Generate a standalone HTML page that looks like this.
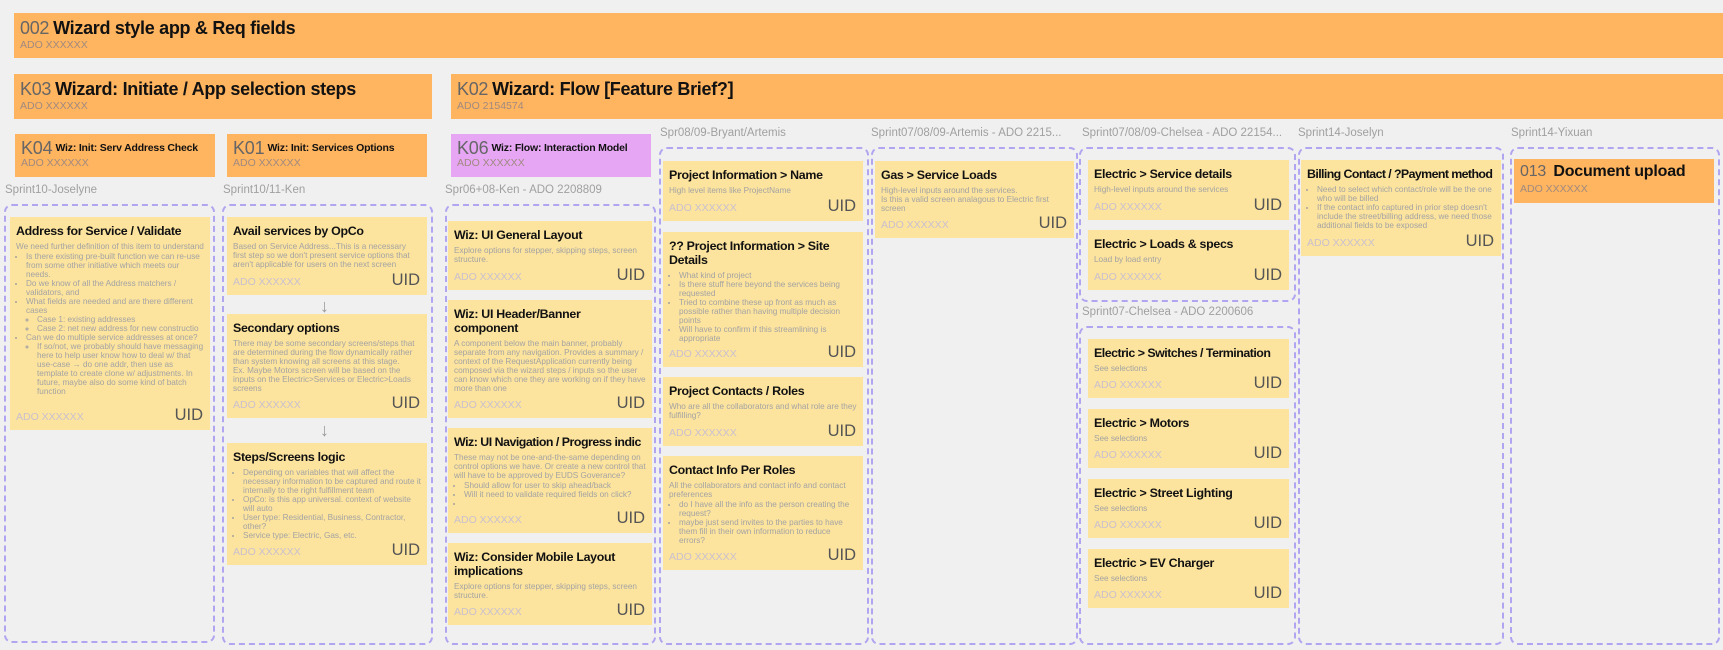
<!DOCTYPE html>
<html><head><meta charset="utf-8"><style>
*{box-sizing:border-box;margin:0;padding:0}
body{width:1723px;height:650px;background:#f0f0f0;font-family:"Liberation Sans",sans-serif;position:relative;overflow:hidden}
.ban{position:absolute;background:#ffb45f;padding:4px 6px}
.ban .t{font-size:18px;color:#111;font-weight:bold;letter-spacing:-0.3px;white-space:nowrap;line-height:22px}
.ban .t span{color:#666;font-weight:normal;margin-right:4px}
.ban .ado{font-size:10.5px;color:#a08a80;line-height:13px}
.sb{position:absolute;background:#ffb45f;padding:6px 6px}
.sb .t{font-size:10.5px;font-weight:bold;color:#111;white-space:nowrap;line-height:16px;letter-spacing:-0.2px}
.sb .t span{font-size:18px;font-weight:normal;color:#666;margin-right:3px;vertical-align:-3px}
.sb .ado{font-size:10.5px;color:#a08a80;line-height:14px}
.lbl{position:absolute;font-size:11.5px;color:#a0a0a0;white-space:nowrap}
.box{position:absolute;border:2px dashed #b0a5f0;border-radius:8px}
.c{position:absolute;background:#fce39e;padding:7px 6px 0 6px}
.c h{display:block;font-size:12.4px;font-weight:bold;color:#111;line-height:14px;letter-spacing:-0.3px;white-space:nowrap}
.c p,.c li{font-size:8.2px;color:#a3a3a3;line-height:9px}
.c p{margin-top:4px}
.c ul{padding-left:10px;margin-top:1px}
.c ul ul{padding-left:11px;margin-top:0}
.c .ado{position:absolute;left:6px;bottom:7px;font-size:10.5px;color:#c9c0cf}
.c .uid{position:absolute;right:7px;bottom:5px;font-size:16.5px;color:#555}
.arr{position:absolute;color:#999;font-size:18px;line-height:18px}
</style></head><body>

<div class="ban" style="left:14px;top:13px;width:1720px;height:45px"><div class="t"><span>002</span>Wizard style app &amp; Req fields</div><div class="ado">ADO XXXXXX</div></div>
<div class="ban" style="left:14px;top:74px;width:418px;height:45px"><div class="t"><span>K03</span>Wizard: Initiate / App selection steps</div><div class="ado">ADO XXXXXX</div></div>
<div class="ban" style="left:451px;top:74px;width:1280px;height:45px"><div class="t"><span>K02</span>Wizard: Flow [Feature Brief?]</div><div class="ado">ADO 2154574</div></div>

<div class="sb" style="left:15px;top:134px;width:200px;height:43px"><div class="t"><span>K04</span>Wiz: Init: Serv Address Check</div><div class="ado">ADO XXXXXX</div></div>
<div class="sb" style="left:227px;top:134px;width:200px;height:43px"><div class="t"><span>K01</span>Wiz: Init: Services Options</div><div class="ado">ADO XXXXXX</div></div>
<div class="sb" style="left:451px;top:134px;width:200px;height:43px;background:#e6a6f4"><div class="t"><span>K06</span>Wiz: Flow: Interaction Model</div><div class="ado">ADO XXXXXX</div></div>

<div class="lbl" style="left:5px;top:184px">Sprint10-Joselyne</div>
<div class="lbl" style="left:223px;top:184px">Sprint10/11-Ken</div>
<div class="lbl" style="left:445px;top:184px">Spr06+08-Ken - ADO 2208809</div>
<div class="lbl" style="left:660px;top:127px">Spr08/09-Bryant/Artemis</div>
<div class="lbl" style="left:871px;top:127px">Sprint07/08/09-Artemis - ADO 2215...</div>
<div class="lbl" style="left:1082px;top:127px">Sprint07/08/09-Chelsea - ADO 22154...</div>
<div class="lbl" style="left:1298px;top:127px">Sprint14-Joselyn</div>
<div class="lbl" style="left:1511px;top:127px">Sprint14-Yixuan</div>
<div class="lbl" style="left:1082px;top:306px">Sprint07-Chelsea - ADO 2200606</div>

<div class="box" style="left:4px;top:204px;width:211px;height:439px"></div>
<div class="box" style="left:222px;top:204px;width:211px;height:441px"></div>
<div class="box" style="left:445px;top:204px;width:211px;height:441px"></div>
<div class="box" style="left:659px;top:147px;width:210px;height:498px"></div>
<div class="box" style="left:871px;top:147px;width:207px;height:498px"></div>
<div class="box" style="left:1079px;top:147px;width:217px;height:155px"></div>
<div class="box" style="left:1079px;top:326px;width:217px;height:319px"></div>
<div class="box" style="left:1298px;top:147px;width:206px;height:498px"></div>
<div class="box" style="left:1510px;top:147px;width:210px;height:498px"></div>

<div class="c" style="left:10px;top:217px;width:200px;height:213px"><h>Address for Service / Validate</h>
<p>We need further definition of this item to understand</p>
<ul><li>Is there existing pre-built function we can re-use from some other initiative which meets our needs.</li>
<li>Do we know of all the Address matchers / validators, and</li>
<li>What fields are needed and are there different cases<ul><li>Case 1: existing addresses</li><li>Case 2: net new address for new constructio</li></ul></li>
<li>Can we do multiple service addresses at once?<ul><li>If so/not, we probably should have messaging here to help user know how to deal w/ that use-case → do one addr, then use as template to create clone w/ adjustments. In future, maybe also do some kind of batch function</li></ul></li></ul>
<div class="ado">ADO XXXXXX</div><div class="uid">UID</div></div>

<div class="c" style="left:227px;top:217px;width:200px;height:78px"><h>Avail services by OpCo</h>
<p>Based on Service Address...This is a necessary first step so we don't present service options that aren't applicable for users on the next screen</p>
<div class="ado">ADO XXXXXX</div><div class="uid">UID</div></div>
<div class="arr" style="left:320px;top:297px">↓</div>
<div class="c" style="left:227px;top:314px;width:200px;height:104px"><h>Secondary options</h>
<p>There may be some secondary screens/steps that are determined during the flow dynamically rather than system knowing all screens at this stage.<br>Ex. Maybe Motors screen will be based on the inputs on the Electric&gt;Services or Electric&gt;Loads screens</p>
<div class="ado">ADO XXXXXX</div><div class="uid">UID</div></div>
<div class="arr" style="left:320px;top:421px">↓</div>
<div class="c" style="left:227px;top:443px;width:200px;height:122px"><h>Steps/Screens logic</h>
<ul style="margin-top:4px"><li>Depending on variables that will affect the necessary information to be captured and route it internally to the right fulfillment team</li><li>OpCo: is this app universal. context of website will auto</li><li>User type: Residential, Business, Contractor, other?</li><li>Service type: Electric, Gas, etc.</li></ul>
<div class="ado">ADO XXXXXX</div><div class="uid">UID</div></div>

<div class="c" style="left:448px;top:221px;width:204px;height:69px"><h>Wiz: UI General Layout</h>
<p>Explore options for stepper, skipping steps, screen structure.</p>
<div class="ado">ADO XXXXXX</div><div class="uid">UID</div></div>
<div class="c" style="left:448px;top:300px;width:204px;height:118px"><h>Wiz: UI Header/Banner<br>component</h>
<p>A component below the main banner, probably separate from any navigation. Provides a summary / context of the RequestApplication currently being composed via the wizard steps / inputs so the user can know which one they are working on if they have more than one</p>
<div class="ado">ADO XXXXXX</div><div class="uid">UID</div></div>
<div class="c" style="left:448px;top:428px;width:204px;height:105px"><h style="letter-spacing:-0.5px">Wiz: UI Navigation / Progress indic</h>
<p>These may not be one-and-the-same depending on control options we have. Or create a new control that will have to be approved by EUDS Goverance?</p>
<ul><li>Should allow for user to skip ahead/back</li><li>Will it need to validate required fields on click?</li><li>&nbsp;</li></ul>
<div class="ado">ADO XXXXXX</div><div class="uid">UID</div></div>
<div class="c" style="left:448px;top:543px;width:204px;height:82px"><h>Wiz: Consider Mobile Layout<br>implications</h>
<p>Explore options for stepper, skipping steps, screen structure.</p>
<div class="ado">ADO XXXXXX</div><div class="uid">UID</div></div>

<div class="c" style="left:663px;top:161px;width:200px;height:60px"><h>Project Information &gt; Name</h>
<p>High level items like ProjectName</p>
<div class="ado">ADO XXXXXX</div><div class="uid">UID</div></div>
<div class="c" style="left:663px;top:232px;width:200px;height:135px"><h>?? Project Information &gt; Site<br>Details</h>
<ul style="margin-top:4px"><li>What kind of project</li><li>Is there stuff here beyond the services being requested</li><li>Tried to combine these up front as much as possible rather than having multiple decision points</li><li>Will have to confirm if this streamlining is appropriate</li></ul>
<div class="ado">ADO XXXXXX</div><div class="uid">UID</div></div>
<div class="c" style="left:663px;top:377px;width:200px;height:69px"><h>Project Contacts / Roles</h>
<p>Who are all the collaborators and what role are they fulfilling?</p>
<div class="ado">ADO XXXXXX</div><div class="uid">UID</div></div>
<div class="c" style="left:663px;top:456px;width:200px;height:114px"><h>Contact Info Per Roles</h>
<p>All the collaborators and contact info and contact preferences</p>
<ul><li>do I have all the info as the person creating the request?</li><li>maybe just send invites to the parties to have them fill in their own information to reduce errors?</li></ul>
<div class="ado">ADO XXXXXX</div><div class="uid">UID</div></div>

<div class="c" style="left:875px;top:161px;width:199px;height:77px"><h>Gas &gt; Service Loads</h>
<p>High-level inputs around the services.<br>Is this a valid screen analagous to Electric first screen</p>
<div class="ado">ADO XXXXXX</div><div class="uid">UID</div></div>

<div class="c" style="left:1088px;top:160px;width:201px;height:60px"><h>Electric &gt; Service details</h><p>High-level inputs around the services</p><div class="ado">ADO XXXXXX</div><div class="uid">UID</div></div>
<div class="c" style="left:1088px;top:230px;width:201px;height:60px"><h>Electric &gt; Loads &amp; specs</h><p>Load by load entry</p><div class="ado">ADO XXXXXX</div><div class="uid">UID</div></div>
<div class="c" style="left:1088px;top:339px;width:201px;height:59px"><h style="letter-spacing:-0.5px">Electric &gt; Switches / Termination</h><p>See selections</p><div class="ado">ADO XXXXXX</div><div class="uid">UID</div></div>
<div class="c" style="left:1088px;top:409px;width:201px;height:59px"><h>Electric &gt; Motors</h><p>See selections</p><div class="ado">ADO XXXXXX</div><div class="uid">UID</div></div>
<div class="c" style="left:1088px;top:479px;width:201px;height:59px"><h>Electric &gt; Street Lighting</h><p>See selections</p><div class="ado">ADO XXXXXX</div><div class="uid">UID</div></div>
<div class="c" style="left:1088px;top:549px;width:201px;height:59px"><h>Electric &gt; EV Charger</h><p>See selections</p><div class="ado">ADO XXXXXX</div><div class="uid">UID</div></div>

<div class="c" style="left:1301px;top:160px;width:200px;height:96px"><h style="letter-spacing:-0.6px">Billing Contact / ?Payment method</h>
<ul style="margin-top:4px"><li>Need to select which contact/role will be the one who will be billed</li><li>If the contact info captured in prior step doesn't include the street/billing address, we need those additional fields to be exposed</li></ul>
<div class="ado">ADO XXXXXX</div><div class="uid">UID</div></div>

<div class="sb" style="left:1514px;top:159px;width:200px;height:44px;padding-top:5px"><div class="t" style="font-size:16px"><span style="font-size:16px;vertical-align:0">013</span> Document upload</div><div class="ado" style="margin-top:2px">ADO XXXXXX</div></div>

</body></html>
